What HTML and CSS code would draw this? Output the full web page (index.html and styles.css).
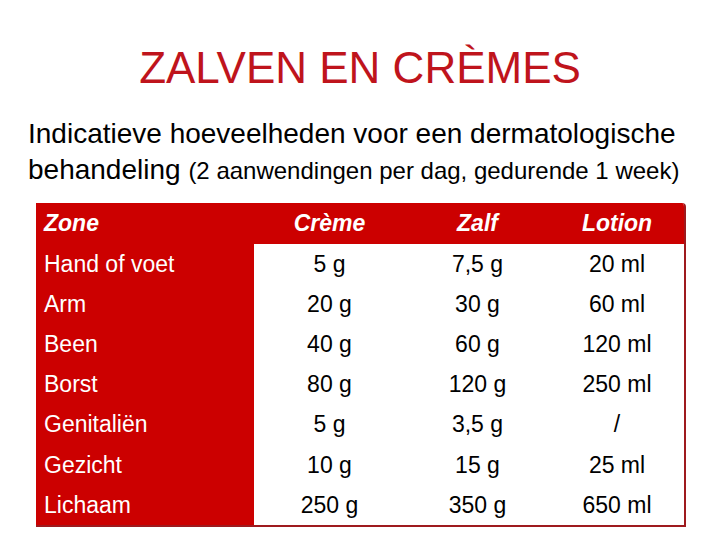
FILE: index.html
```html
<!DOCTYPE html>
<html lang="nl">
<head>
<meta charset="utf-8">
<link rel="stylesheet" href="styles.css">
</head>
<body>
<div class="slide">
  <h1 class="title">ZALVEN EN CRÈMES</h1>
  <div class="subtitle">
    <div class="line">Indicatieve hoeveelheden voor een dermatologische</div>
    <div class="line">behandeling <span class="small">(2 aanwendingen per dag, gedurende 1 week)</span></div>
  </div>
  <table class="doses">
    <thead>
      <tr><th class="zone">Zone</th><th class="c1">Crème</th><th class="c2">Zalf</th><th class="c3">Lotion</th></tr>
    </thead>
    <tbody>
      <tr><td class="zone">Hand of voet</td><td>5 g</td><td>7,5 g</td><td>20 ml</td></tr>
      <tr><td class="zone">Arm</td><td>20 g</td><td>30 g</td><td>60 ml</td></tr>
      <tr><td class="zone">Been</td><td>40 g</td><td>60 g</td><td>120 ml</td></tr>
      <tr><td class="zone">Borst</td><td>80 g</td><td>120 g</td><td>250 ml</td></tr>
      <tr><td class="zone">Genitaliën</td><td>5 g</td><td>3,5 g</td><td>/</td></tr>
      <tr><td class="zone">Gezicht</td><td>10 g</td><td>15 g</td><td>25 ml</td></tr>
      <tr><td class="zone">Lichaam</td><td>250 g</td><td>350 g</td><td>650 ml</td></tr>
    </tbody>
  </table>
</div>
</body>
</html>
```
FILE: styles.css
```css
html, body {
  margin: 0;
  padding: 0;
  background: #ffffff;
}
body {
  font-family: "Liberation Sans", Arial, sans-serif;
  color: #000000;
}
.slide {
  width: 720px;
  height: 540px;
  overflow: hidden;
  padding-top: 46px;
  box-sizing: border-box;
}
.title {
  margin: 0;
  font-size: 44px;
  line-height: 44px;
  font-weight: normal;
  color: #bf141c;
  text-align: center;
}
.subtitle {
  margin: 26px 0 0 28px;
  font-size: 28px;
  width: 680px;
}
.line {
  height: 36px;
  line-height: 36px;
  white-space: nowrap;
}
.small {
  font-size: 24px;
  line-height: 24px;
}
.doses {
  margin: 15px 0 0 36px;
  width: 650px;
  border-collapse: separate;
  border-spacing: 0;
  font-size: 23px;
  border-right: 2px solid #9e1a1e;
  border-bottom: 2px solid #9e1a1e;
  border-top-right-radius: 4px;
  overflow: hidden;
}
.doses th {
  background: #cc0000;
  color: #ffffff;
  font-style: italic;
  font-weight: bold;
  height: 41px;
  padding: 0;
  text-align: center;
}
.doses td {
  height: 40.2px;
  padding: 0;
  text-align: center;
}
.doses .zone {
  width: 210px;
  padding-left: 8px;
  text-align: left;
  background: #cc0000;
  color: #ffffff;
}
.doses .c1 { width: 151px; }
.doses .c2 { width: 145px; }
.doses .c3 { width: 134px; }
```
